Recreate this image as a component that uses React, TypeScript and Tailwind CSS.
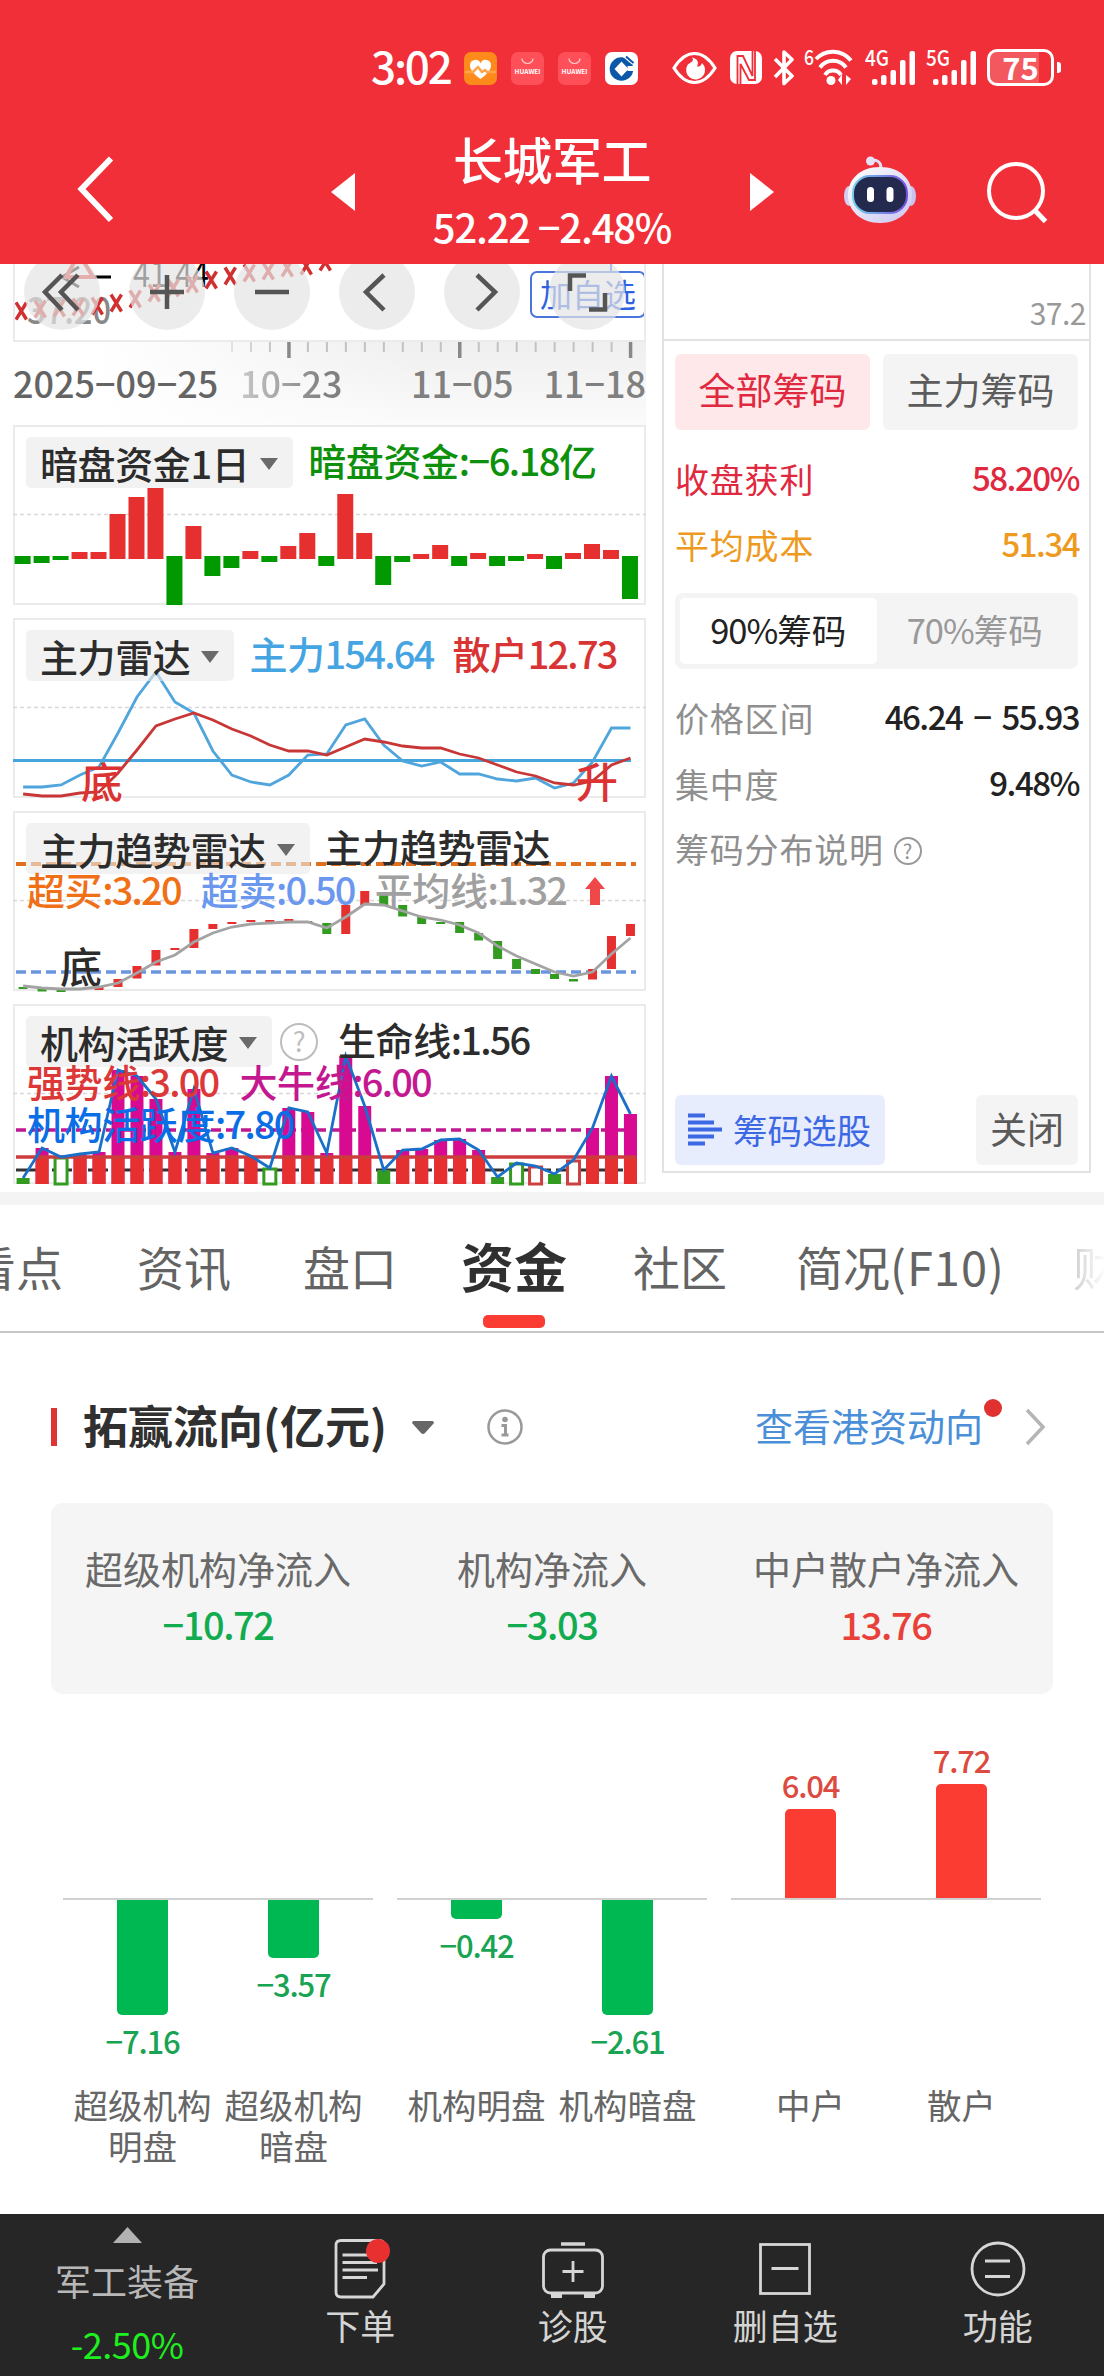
import type { ReactNode } from "react";

const STEP = 18.98;
const cx = (i: number) => 10.1 + STEP * i;
const toPoints = (ys: number[]) => ys.map((y, i) => `${cx(i)},${y}`).join(" ");

// positive = inflow, negative = outflow, in pixels of bar height
const DARK_FUNDS = [
  -8, -7, -4, 7, 7, 45, 62, 71, -49, 33, -20, -12, 8, -6, 13, 26, -10, 65, 26, -29, -6, 5, 14, -10,
  6, -10, -5, 5, -13, 6, 15, 9, -43,
];

const MAIN_FORCE = [
  169, 169, 167, 157, 149, 115, 79, 54, 84, 95, 133, 157, 164, 167, 157, 137, 136, 107, 101, 127,
  143, 148, 144, 156, 156, 161, 163, 160, 170, 165, 144, 110, 110,
];
const RETAIL = [
  176, 178, 178, 175, 174, 155, 132, 108, 101, 95, 102, 111, 118, 127, 133, 133, 137, 129, 121, 124,
  128, 130, 130, 136, 140, 147, 154, 158, 165, 167, 163, 147, 140,
];

const TREND = [
  175, 177, 178, 178, 176, 172, 162, 151, 144, 131, 122, 116, 113, 112, 111, 111, 117, 106, 93, 94,
  100, 106, 109, 114, 122, 135, 145, 153, 161, 165, 161, 143, 127,
];
// [up, top, height]
const CANDLES: [number, number, number][] = [
  [0, 176, 2], [0, 178, 2.5], [0, 178, 3], [1, 177, 2], [1, 176, 3], [1, 168, 8], [1, 155, 12.5],
  [1, 139, 15.5], [1, 137, 2], [1, 118, 19], [1, 113, 5], [1, 111, 2], [1, 109, 2], [1, 109, 2],
  [1, 108, 3], [0, 110, 2], [0, 112, 11], [1, 94, 29], [1, 80, 14], [0, 84, 10], [0, 94, 11.5],
  [0, 106, 7], [0, 111, 2], [0, 111, 11], [0, 122, 7.5], [0, 130, 18], [0, 148, 10], [0, 158, 5],
  [0, 163, 5], [0, 168, 2.5], [1, 158, 10.5], [1, 125, 33], [1, 113, 12],
];

const ACTIVITY = [
  174, 144, 153, 150, 148, 66, 72, 95, 148, 85, 149, 144, 152, 164, 104, 108, 149, 52, 102, 166,
  146, 145, 136, 135, 146, 173, 159, 162, 170, 156, 124, 72, 110,
];
const HOLLOW_GREEN = [2, 13, 26];
const HOLLOW_RED = [27, 29];
const SOLID_GREEN = [0, 19, 25, 28];

const CROSSES = [
  47, 45, 44, 43, 42, 39, 35, 29, 24, 20, 16, 12, 9, 7, 4, 2, -2,
];

const FLOW_GROUPS = [
  [
    { name: "超级机构明盘", value: "−7.16", height: 115, up: false },
    { name: "超级机构暗盘", value: "−3.57", height: 58, up: false },
  ],
  [
    { name: "机构明盘", value: "−0.42", height: 19, up: false },
    { name: "机构暗盘", value: "−2.61", height: 115, up: false },
  ],
  [
    { name: "中户", value: "6.04", height: 89, up: true },
    { name: "散户", value: "7.72", height: 114, up: true },
  ],
];

function Signal({ label }: { label: string }) {
  return (
    <svg className="overflow-visible" width="52" height="38" viewBox="0 0 52 38" fill="#fff">
      <text x="0" y="17" fontSize="22" fontWeight="500" textLength="24" lengthAdjust="spacingAndGlyphs">
        {label}
      </text>
      <rect x="7" y="30" width="5.5" height="6" rx="2" />
      <rect x="16" y="26" width="5.5" height="10" rx="2" />
      <rect x="25.5" y="21" width="5.5" height="15" rx="2" />
      <rect x="35" y="11" width="5.5" height="25" rx="2" />
      <rect x="44.500" y="2" width="5.5" height="34" rx="2" />
    </svg>
  );
}

function HuaweiIcon() {
  return (
    <svg width="33" height="33" viewBox="0 0 33 33">
      <rect width="33" height="33" rx="7" fill="#ff4f58" />
      <path d="M11 6.500a5.500 5 0 0 0 11 0" fill="none" stroke="#ffd0d0" strokeWidth="1.200" />
      <text x="3.500" y="21.500" fontSize="6.500" fontWeight="700" fill="#fff" textLength="26" lengthAdjust="spacingAndGlyphs">
        HUAWEI
      </text>
    </svg>
  );
}

function StatusBar() {
  return (
    <div className="flex h-[137px] pl-[371px] pt-[49px]">
      <span className="-mt-[2px] w-[93px] text-[44px] font-medium leading-[36px] tracking-[-2.2px]">3:02</span>
      <div className="mt-[3px] flex h-[33px] w-[208px] gap-[14px]">
        <svg width="33" height="33" viewBox="0 0 33 33">
          <rect width="33" height="33" rx="7" fill="#ff8a1c" />
          <path d="M16.500 27C9 21.500 6 17.500 6 13.500a5.400 5.400 0 0 1 10.500-2 5.400 5.400 0 0 1 10.500 2c0 4-3 8-10.500 13.500z" fill="#fff" />
          <path d="M1 20h8l5-5 4 5 3-2 2 2h9" fill="none" stroke="#ffa54a" strokeWidth="2.500" />
        </svg>
        <HuaweiIcon />
        <HuaweiIcon />
        <svg width="33" height="33" viewBox="0 0 33 33">
          <rect width="33" height="33" rx="7" fill="#fff" />
          <circle cx="16.500" cy="17" r="11.800" fill="#0b57a8" />
          <path d="M16.500 9.500l7 7.500-7 7.500-7-7.500z" fill="#fff" />
          <path d="M22.500 14h8v5h-8z" fill="#fff" />
          <path d="M18.500 4.500l9 7.500" stroke="#fff" strokeWidth="1.500" />
          <path d="M21 4.500l7.500 6.500" stroke="#0b57a8" strokeWidth="2" />
        </svg>
      </div>
      <svg className="mr-[13px] mt-px" width="45" height="36" viewBox="0 0 45 36">
        <path d="M2 18Q11 3.500 22.500 3.500T43 18Q34 32.500 22.500 32.500T2 18z" fill="none" stroke="#fff" strokeWidth="3.200" />
        <path d="M20 7.500c3 4-2 5-4.500 7.500A9.500 9.500 0 1 0 30 13c-1 3-3 4-5 3.500C27.500 12 25 8.500 20 7.500z" fill="#fff" />
      </svg>
      <svg className="mr-[11px] mt-px" width="32" height="36" viewBox="0 0 32 36">
        <rect x="0" y="1" width="32" height="33" rx="7" fill="#fff" />
        <path d="M7.500 35V6l5.500 0 9.500 20V1M10.500 35V14l8.500 16h6V1" fill="none" stroke="#f12f38" strokeWidth="1.800" />
      </svg>
      <svg className="mr-[9px] mt-px" width="22" height="36" viewBox="0 0 22 36">
        <path d="M2 9l17 17-8 7.500V2l8 7.500L2 27" fill="none" stroke="#fff" strokeWidth="3.600" strokeLinejoin="round" />
      </svg>
      <svg className="mr-[11px] overflow-visible" width="50" height="38" viewBox="0 0 50 38">
        <text x="0" y="16" fontSize="21" fontWeight="500" fill="#fff" textLength="10" lengthAdjust="spacingAndGlyphs">
          6
        </text>
        <g fill="none" stroke="#fff" strokeWidth="4">
          <path d="M12 10a23 23 0 0 1 35 1.500" />
          <path d="M16 18.500a16 16 0 0 1 26 0" />
          <path d="M21 26a9.500 9.500 0 0 1 16 0" />
        </g>
        <circle cx="27" cy="31.500" r="4.500" fill="#fff" />
        <path d="M34 31l4-6v11zM42 26v10l5-6z" fill="#fff" />
      </svg>
      <span className="mr-[9px]">
        <Signal label="4G" />
      </span>
      <span className="mr-[9px]">
        <Signal label="5G" />
      </span>
      <div className="relative flex h-[37px] w-[67px] items-center justify-center rounded-[10px] border-3 border-white">
        <div className="absolute inset-y-0 left-0 w-[49px] rounded-l-[7px] bg-white/20" />
        <span className="relative pb-0.5 text-[31px] font-bold leading-[31px]">75</span>
      </div>
      <div className="ml-[3px] mt-[13px] h-[11px] w-[4px] rounded-r-[3px] bg-white" />
    </div>
  );
}

function Robot() {
  return (
    <svg width="74" height="70" viewBox="0 0 74 70">
      <defs>
        <linearGradient id="shell" x1="0" y1="0" x2="1" y2="1">
          <stop offset="0" stopColor="#fff" />
          <stop offset="1" stopColor="#c9c6f0" />
        </linearGradient>
        <linearGradient id="rim" x1="0" y1="0" x2="1" y2="0">
          <stop offset="0" stopColor="#6fd0ea" />
          <stop offset="1" stopColor="#7a4fe0" />
        </linearGradient>
      </defs>
      <path d="M38 13c0-6-3-8-9-8" fill="none" stroke="#e2def6" strokeWidth="3" />
      <circle cx="27.500" cy="6" r="4.500" fill="#e6e2f8" />
      <ellipse cx="6" cy="41" rx="5" ry="10" fill="#d3cff2" />
      <ellipse cx="68" cy="41" rx="5" ry="10" fill="#c8c4ee" />
      <path d="M37 12c21 0 32 13 32 28S57 68 37 68 5 55 5 40 16 12 37 12z" fill="url(#shell)" />
      <rect x="10" y="21" width="54" height="37" rx="17" fill="#232a4d" stroke="url(#rim)" strokeWidth="2" />
      <rect x="24" y="32" width="7" height="15" rx="3.500" fill="#fff" />
      <rect x="43.500" y="32" width="7" height="15" rx="3.500" fill="#fff" />
    </svg>
  );
}

function TitleBar() {
  return (
    <div className="flex h-[127px] items-start">
      <svg className="ml-[76px] mt-[18px]" width="40" height="70" viewBox="0 0 40 70">
        <path d="M35 3.500L5.500 34 35 65" fill="none" stroke="#fff" strokeWidth="6" />
      </svg>
      <svg className="ml-[215px] mt-[36px]" width="24" height="38" viewBox="0 0 24 38">
        <path d="M24 0v38L0 19z" fill="#fff" />
      </svg>
      <div className="ml-[45px] flex w-[304px] flex-col items-center">
        <span className="-mt-[3px] text-[50px] font-medium leading-[48px] tracking-[-0.5px]">长城军工</span>
        <span className="mt-[20px] whitespace-nowrap text-[40px] font-medium leading-[48px] tracking-[-1.2px]">
          52.22 −2.48%
        </span>
      </div>
      <svg className="ml-[46px] mt-[36px]" width="24" height="38" viewBox="0 0 24 38">
        <path d="M0 0v38L24 19z" fill="#fff" />
      </svg>
      <span className="ml-[69px] mt-[18px]">
        <Robot />
      </span>
      <svg className="ml-[69px] mt-[23px]" width="64" height="64" viewBox="0 0 64 64">
        <circle cx="30" cy="31" r="27" fill="none" stroke="#fff" strokeWidth="4" />
        <path d="M48 49.500l11.500 12" stroke="#fff" strokeWidth="5" />
      </svg>
    </div>
  );
}

function ToolButton({ path }: { path: string }) {
  return (
    <span className="size-[76px] rounded-full bg-[#e4e4e4]/70">
      <svg width="76" height="76" viewBox="0 0 76 76">
        <path d={path} fill="none" stroke="#555" strokeWidth="4.500" />
      </svg>
    </span>
  );
}

function PriceStrip() {
  return (
    <div className="relative h-[78px] overflow-hidden border-x-2 border-b-2 border-[#ebebeb]">
      <svg className="absolute -left-0.5 top-0" width="633" height="78" viewBox="0 0 633 78">
        <text x="14" y="60" fontSize="37" fontWeight="500" fill="#888" textLength="84" lengthAdjust="spacingAndGlyphs">
          37.20
        </text>
        <text x="120" y="23" fontSize="36" fill="#000" textLength="76" lengthAdjust="spacingAndGlyphs">
          41.44
        </text>
        <path d="M49 13h49M66 3L49 13l17 10" fill="none" stroke="#000" strokeWidth="3" />
        <path d="M53 13h27L66-10z" fill="none" stroke="#e03838" strokeWidth="4" />
        {CROSSES.map((y, i) => (
          <path
            key={i}
            d={`M${3 + i * 19} ${y - 8.5}l10.500 17m0-17l-10.500 17`}
            stroke="#d03030"
            strokeWidth="3.400"
          />
        ))}
        <path d="M598 0v8" stroke="#3a5ee0" strokeWidth="2" />
      </svg>
      <span className="absolute -right-0.5 top-[7px] h-[47px] w-[116px] rounded-[7px] border-2 border-[#4a76dc] text-center text-[32px] leading-[40px] text-[#2f62e0]">
        加自选
      </span>
      <div className="absolute -top-[10px] left-[9px] flex gap-[29px]">
        <ToolButton path="M38 21L21 38l17 18M54 21L37 38l17 18" />
        <ToolButton path="M38 21v34M21 38h34" />
        <ToolButton path="M21 38h34" />
        <ToolButton path="M45 21L27 38l18 18" />
        <ToolButton path="M33 21l18 17-18 18" />
        <ToolButton path="M37 21.500H21V37M40 55.500h16V39" />
      </div>
    </div>
  );
}

function DateRuler() {
  return (
    <div className="relative h-[83px] bg-linear-to-b from-[#efefef] to-[#fbfbfb] text-[#808080]">
      <div className="absolute inset-y-0 left-0 w-[400px] bg-linear-to-r from-white from-20% to-white/0" />
      <svg className="relative block" width="633" height="18" viewBox="0 0 633 18">
        {Array.from({ length: 22 }, (_, k) => {
          const major = k % 9 === 3;
          return (
            <path
              key={k}
              d={`M${219 + k * STEP} 0v${major ? 16 : 10}`}
              stroke={major ? "#888" : "#c2c2c2"}
              strokeWidth={major ? 3.5 : 2}
              opacity={k < 3 ? 0.4 + k * 0.25 : 1}
            />
          );
        })}
      </svg>
      <div className="relative mt-[2px] flex text-[36px] font-medium leading-[40px]">
        <span className="w-[227px] text-[#646464]">2025−09−25</span>
        <span className="w-[171px] bg-linear-to-r from-[#c8c8c8] to-[#808080] to-50% bg-clip-text text-transparent">
          10−23
        </span>
        <span>11−05</span>
        <span className="ml-auto">11−18</span>
      </div>
    </div>
  );
}

function Legend({ name, value, className }: { name: string; value: string; className: string }) {
  return (
    <span className={className}>
      {name}
      <span className="tracking-[-1.8px]">{value}</span>
    </span>
  );
}

function Panel({ title, chart, legend, children }: {
  title: string;
  chart: ReactNode;
  legend: ReactNode;
  children?: ReactNode;
}) {
  return (
    <section className="relative h-[180px] border-2 border-[#ebebeb] font-medium">
      <svg className="absolute -left-0.5 -top-0.5 overflow-visible" width="633" height="180" viewBox="0 0 633 180">
        <path d="M0 89.500h633" stroke="#d8d8d8" strokeWidth="1.500" strokeDasharray="4 3" />
        {chart}
      </svg>
      <div className="relative ml-[11px] mt-[10px] flex whitespace-nowrap text-[38px] leading-[46px] tracking-[-0.4px]">
        <span className="mr-[15px] flex h-[51px] items-center rounded-[5px] bg-[#e9e9e9]/60 pl-[14px] pr-[15px] text-[#2c2c2c]">
          {title}
          <svg className="ml-[11px] mt-[2px]" width="18" height="12" viewBox="0 0 18 12">
            <path d="M0 0h18L9 12z" fill="#6a6a6a" />
          </svg>
        </span>
        {legend}
      </div>
      {children}
    </section>
  );
}

function DarkFundsPanel() {
  return (
    <Panel
      title="暗盘资金1日"
      legend={
        <span className="text-[#0d910d]">
          暗盘资金<span className="tracking-[-1.5px]">:−6.18</span>亿
        </span>
      }
      chart={DARK_FUNDS.map((v, i) => (
        <rect
          key={i}
          x={cx(i) - 8.5}
          y={v > 0 ? 134 - v : 131}
          width="16"
          height={Math.abs(v)}
          fill={v > 0 ? "#e63030" : "#009a00"}
        />
      ))}
    />
  );
}

function RadarPanel() {
  return (
    <Panel
      title="主力雷达"
      legend={
        <>
          <Legend name="主力" value="154.64" className="text-[#45a5e2]" />
          <Legend name="散户" value="12.73" className="ml-[19px] text-[#d83434]" />
        </>
      }
      chart={
        <>
          <path d="M0 142.500h618" stroke="#45a5dc" strokeWidth="3" />
          <polyline points={toPoints(MAIN_FORCE)} fill="none" stroke="#4fa5dc" strokeWidth="2.800" />
          <polyline points={toPoints(RETAIL)} fill="none" stroke="#c93636" strokeWidth="2.800" />
          <g fill="#dc3232" fontSize="42">
            <text x="68" y="180">底</text>
            <text x="563" y="180">升</text>
          </g>
        </>
      }
    />
  );
}

function TrendPanel() {
  return (
    <Panel
      title="主力趋势雷达"
      legend={<span className="text-[#2c2c2c]">主力趋势雷达</span>}
      chart={
        <>
          <path d="M3 53h620" stroke="#e07020" strokeWidth="4" strokeDasharray="10 5" />
          <path d="M3 161h620" stroke="#6a96e0" strokeWidth="3.500" strokeDasharray="10 5" />
          <text x="47" y="172" fontSize="42" fill="#2c2c2c">底</text>
          {CANDLES.map(([up, top, height], i) => (
            <rect key={i} x={cx(i) - 4.5} y={top} width="9" height={height} fill={up ? "#e63030" : "#339c20"} />
          ))}
          <polyline points={toPoints(TREND)} fill="none" stroke="#a3a3a3" strokeWidth="2.800" />
        </>
      }
    >
      <div className="relative -mt-[8px] ml-[12px] flex whitespace-nowrap text-[38px] leading-[46px] tracking-[-0.4px]">
        <Legend name="超买" value=":3.20" className="text-[#f07018]" />
        <Legend name="超卖" value=":0.50" className="ml-[20px] text-[#6b98ee]" />
        <Legend name="平均线" value=":1.32" className="ml-[20px] text-[#a0a0a0]" />
        <svg className="ml-[19px] mt-[11px]" width="20" height="28" viewBox="0 0 20 28">
          <path d="M10 0l10 12h-5v16H5V12H0z" fill="#f04848" />
        </svg>
      </div>
    </Panel>
  );
}

function ActivityBar({ index, top }: { index: number; top: number }) {
  const x = cx(index) - 6.5;
  if (SOLID_GREEN.includes(index)) {
    return <rect x={x} y={top} width="13" height={180 - top} fill="#339c20" />;
  }
  if (HOLLOW_GREEN.includes(index) || HOLLOW_RED.includes(index)) {
    return (
      <rect
        x={x + 0.5}
        y={top + 1}
        width="12"
        height={179 - top}
        fill="#fff"
        stroke={HOLLOW_RED.includes(index) ? "#cc4040" : "#339c20"}
        strokeWidth="3"
      />
    );
  }
  return (
    <>
      <rect x={x} y={top} width="13" height={180 - top} fill="#d80a92" />
      <rect x={x} y="154" width="13" height="26" fill="#e63030" />
    </>
  );
}

function ActivityPanel() {
  return (
    <Panel
      title="机构活跃度"
      legend={
        <>
          <span className="-ml-[7px] mt-[7px] size-[38px] rounded-full border-2 border-[#bdbdbd] text-center text-[27px] font-normal leading-[32px] text-[#bdbdbd]">
            ?
          </span>
          <Legend name="生命线" value=":1.56" className="ml-[20px] text-[#2c2c2c]" />
        </>
      }
      chart={
        <>
          <path d="M3 126h620" stroke="#c01890" strokeWidth="3.500" strokeDasharray="10 5" />
          <path d="M3 166h620" stroke="#333" strokeWidth="3" strokeDasharray="20 5 6 5" />
          {ACTIVITY.map((top, i) => (
            <ActivityBar key={i} index={i} top={top} />
          ))}
          <path d="M3 153h620" stroke="#cc3c3c" strokeWidth="3.500" />
          <polyline points={toPoints(ACTIVITY)} fill="none" stroke="#1a70c8" strokeWidth="2.800" />
        </>
      }
    >
      <div className="relative -mt-[7px] ml-[12px] whitespace-nowrap text-[38px] leading-[42px] tracking-[-0.4px]">
        <div className="flex">
          <Legend name="强势线" value=":3.00" className="text-[#dc3838]" />
          <Legend name="大牛线" value=":6.00" className="ml-[21px] text-[#c41890]" />
        </div>
        <Legend name="机构活跃度" value=":7.80" className="text-[#0a6ee6]" />
      </div>
    </Panel>
  );
}

function ChipRow({ label, value, color, valueColor }: {
  label: string;
  value: string;
  color: string;
  valueColor: string;
}) {
  return (
    <div className="flex h-[66px] items-center justify-between pb-1 text-[34px]">
      <span className={`tracking-[0.8px] ${color}`}>{label}</span>
      <span className={`-mr-[1px] text-[33px] font-medium tracking-[-1.5px] [word-spacing:5px] ${valueColor}`}>
        {value}
      </span>
    </div>
  );
}

function ChipPanel() {
  return (
    <aside className="ml-[16px] flex h-[909px] w-[429px] flex-col border-x-2 border-b-2 border-[#e2e2e2]">
      <div className="h-[77px] border-b-2 border-[#e2e2e2] pr-[3px] pt-[28px] text-right text-[30px] leading-[40px] tracking-[-0.5px] text-[#999]">
        37.2
      </div>
      <div className="flex flex-1 flex-col px-[11px] pt-[13px]">
        <div className="flex gap-[13px] text-center text-[37px] leading-[70px]">
          <span className="h-[76px] flex-1 rounded-[6px] bg-[#fee8ea] text-[#e0283e]">全部筹码</span>
          <span className="h-[76px] flex-1 rounded-[6px] bg-[#f4f4f4] text-[#5c5c5c]">主力筹码</span>
        </div>
        <div className="mt-[17px]">
          <ChipRow label="收盘获利" value="58.20%" color="text-[#e0283e]" valueColor="text-[#e0283e]" />
          <ChipRow label="平均成本" value="51.34" color="text-[#ee9a20]" valueColor="text-[#ee9a20]" />
        </div>
        <div className="mt-[14px] flex h-[76px] rounded-[8px] bg-[#f4f4f4] p-[5px] text-center text-[34.500px] leading-[62px]">
          <span className="flex-1 rounded-[5px] bg-white text-[#222]">
            <span className="tracking-[-1px]">90%</span>筹码
          </span>
          <span className="flex-1 text-[#999]">
            <span className="tracking-[-1px]">70%</span>筹码
          </span>
        </div>
        <div className="mt-[17px]">
          <ChipRow label="价格区间" value="46.24 − 55.93" color="text-[#8f8f8f]" valueColor="text-[#222]" />
          <ChipRow label="集中度" value="9.48%" color="text-[#8f8f8f]" valueColor="text-[#222]" />
        </div>
        <div className="flex h-[66px] items-center pb-[5px] text-[34px] tracking-[0.8px] text-[#8f8f8f]">
          筹码分布说明
          <span className="ml-[10px] mt-1 size-[28px] rounded-full border-2 border-[#999] text-center text-[20px] leading-[23px]">
            ?
          </span>
        </div>
        <div className="mb-[6px] mt-auto flex justify-between">
          <span className="flex h-[70px] w-[210px] items-center rounded-[6px] bg-[#e8edfd] pb-[2px] pl-[13px] text-[34.500px] leading-[60px] text-[#3d68e4]">
            <svg className="mr-[11px] mt-[2px]" width="34" height="34" viewBox="0 0 34 34">
              <path d="M0 2.500h17M0 9.500h26M0 16.500h34M0 23.500h26M0 30.500h17" stroke="#3d68e4" strokeWidth="4" />
            </svg>
            筹码选股
          </span>
          <span className="h-[70px] w-[102px] rounded-[6px] bg-[#f4f4f4] text-center text-[37px] leading-[66px] text-[#5a5a5a]">
            关闭
          </span>
        </div>
      </div>
    </aside>
  );
}

function Tabs() {
  return (
    <nav className="flex h-[128px] items-center overflow-hidden whitespace-nowrap border-b-2 border-[#c6c6c6] pb-[4px] text-[47px] text-[#646464]">
      <span className="-ml-[31px]">看点</span>
      <span className="ml-[74px]">资讯</span>
      <span className="ml-[72px]">盘口</span>
      <span className="relative ml-[64px] text-[53px] font-bold text-[#303030]">
        资金
        <span className="absolute left-[22px] top-[89px] h-[13px] w-[62px] rounded-[5px] bg-[#fb3c32]" />
      </span>
      <span className="ml-[66px]">社区</span>
      <span className="ml-[69px]">
        简况<span className="tracking-[1px]">(F10)</span>
      </span>
      <span className="ml-[68px] bg-linear-to-r from-[#cfcfcf] to-white to-70% bg-clip-text text-transparent">财</span>
    </nav>
  );
}

function Summary({ label, value, color }: { label: string; value: string; color: string }) {
  return (
    <div className="flex w-[334px] flex-col items-center">
      <span className="text-[38px] leading-[56px] text-[#6a6a6a]">{label}</span>
      <span className={`text-[38px] font-medium leading-[56px] tracking-[-1.4px] ${color}`}>{value}</span>
    </div>
  );
}

function FundFlow() {
  return (
    <section className="h-[881px]">
      <div className="flex h-[170px] items-center px-[51px] pt-[18px]">
        <span className="h-[38px] w-[6px] bg-[#e03434]" />
        <h2 className="ml-[26px] pb-1 text-[45px] font-bold leading-[60px] text-[#303030]">拓赢流向(亿元)</h2>
        <svg className="ml-[25px]" width="22" height="13" viewBox="0 0 22 13">
          <path d="M1 0h20l1 2-9 10q-2 2-4 0L0 2z" fill="#666" />
        </svg>
        <svg className="ml-[53px]" width="36" height="36" viewBox="0 0 36 36" fill="none" stroke="#999" strokeWidth="2.500">
          <circle cx="18" cy="18" r="16.500" />
          <circle cx="18" cy="10.500" r="2.800" fill="#999" stroke="none" />
          <path d="M14.500 16.500h4V26M14.500 26h7" strokeWidth="3" />
        </svg>
        <span className="relative ml-auto mr-[42px] pb-1 text-[38px] leading-[50px] text-[#4a8fd8]">
          查看港资动向
          <span className="absolute -right-[19px] -top-px size-[18px] rounded-full bg-[#e03030]" />
        </span>
        <svg className="mr-[8px]" width="20" height="38" viewBox="0 0 20 38">
          <path d="M2 2l16 17L2 36" fill="none" stroke="#b5b5b5" strokeWidth="3.500" />
        </svg>
      </div>

      <div className="mx-[51px] flex h-[191px] rounded-[12px] bg-[#f5f5f5] pt-[37px]">
        <Summary label="超级机构净流入" value="−10.72" color="text-[#12ac50]" />
        <Summary label="机构净流入" value="−3.03" color="text-[#12ac50]" />
        <Summary label="中户散户净流入" value="13.76" color="text-[#e8413a]" />
      </div>

      <div className="flex gap-[24px] px-[63px]">
        {FLOW_GROUPS.map((group) => (
          <div key={group[0].name} className="w-[310px] text-center text-[31px] font-medium">
            <div className="flex h-[204px] items-end justify-center text-[#dc4a40]">
              {group.map((bar) => (
                <div key={bar.name} className="flex w-[151px] flex-col items-center">
                  {bar.up && (
                    <>
                      <span className="leading-[48px] tracking-[-1.2px]">{bar.value}</span>
                      <span className="w-[51px] rounded-t-[5px] bg-[#fb3c32]" style={{ height: bar.height }} />
                    </>
                  )}
                </div>
              ))}
            </div>
            <div className="h-0.5 bg-[#d0d0d0]" />
            <div className="flex h-[184px] justify-center text-[#18a452]">
              {group.map((bar) => (
                <div key={bar.name} className="flex w-[151px] flex-col items-center">
                  {!bar.up && (
                    <>
                      <span className="w-[51px] rounded-b-[5px] bg-[#00b852]" style={{ height: bar.height }} />
                      <span className="leading-[51px] tracking-[-1.2px]">{bar.value}</span>
                    </>
                  )}
                </div>
              ))}
            </div>
            <div className="flex justify-center text-[34.500px] font-normal leading-[41px] text-[#666]">
              {group.map((bar) => (
                <div key={bar.name} className="w-[151px] px-[4px]">
                  {bar.name}
                </div>
              ))}
            </div>
          </div>
        ))}
      </div>
    </section>
  );
}

function NavItem({ label, children }: { label: string; children: ReactNode }) {
  return (
    <div className="flex w-[212.500px] flex-col items-center pt-[22px]">
      <svg width="70" height="66" viewBox="0 0 70 66" fill="none" stroke="#d6d6d6" strokeWidth="2.800">
        {children}
      </svg>
      <span className="text-[35px] leading-[46px]">{label}</span>
    </div>
  );
}

function BottomBar() {
  return (
    <footer className="flex h-[162px] bg-[#262626] text-[#d4d4d4]">
      <div className="flex w-[254px] flex-col items-center pt-[13px] text-[36px]">
        <svg width="29" height="16" viewBox="0 0 29 16">
          <path d="M14.500 0L29 16H0z" fill="#b2b2b2" />
        </svg>
        <span className="mt-[12px] leading-[50px] text-[#b8b8b8]">军工装备</span>
        <span className="mt-[13px] leading-[50px] tracking-[-0.5px] text-[#1fee1f]">-2.50%</span>
      </div>
      <NavItem label="下单">
        <path d="M16 4.500h38q5 0 5 5V48L48 61H16q-5 0-5-5V9.500q0-5 5-5z" />
        <path d="M17.500 19H43M17.500 26.500H52M17.500 34H53M17.500 41.500H42" strokeWidth="3.200" />
        <circle cx="53" cy="15" r="12" fill="#e83030" stroke="none" />
      </NavItem>
      <NavItem label="诊股">
        <rect x="5.500" y="14" width="59" height="43" rx="7" />
        <path d="M23 8h24" strokeWidth="3.500" />
        <path d="M13 60h11M46 60h11" strokeWidth="4" />
        <path d="M35 25v21M24.500 35.500h21" />
      </NavItem>
      <NavItem label="删自选">
        <rect x="10.500" y="8.500" width="49" height="49" />
        <path d="M21.500 32.500h27" strokeWidth="3" />
      </NavItem>
      <NavItem label="功能">
        <circle cx="35" cy="33" r="26" />
        <path d="M22 25h25M22 40.500h25" strokeWidth="3.200" />
      </NavItem>
    </footer>
  );
}

export default function App() {
  return (
    <div className="w-[1104px] overflow-hidden bg-white font-['Noto_Sans_CJK_SC',sans-serif]">
      <header className="h-[264px] bg-[#f12f38] text-white">
        <StatusBar />
        <TitleBar />
      </header>
      <main className="flex h-[928px]">
        <div className="ml-[13px] w-[633px]">
          <PriceStrip />
          <DateRuler />
          <div className="flex flex-col gap-[13px]">
            <DarkFundsPanel />
            <RadarPanel />
            <TrendPanel />
            <ActivityPanel />
          </div>
        </div>
        <ChipPanel />
      </main>
      <div className="h-[13px] bg-[#f4f4f4]" />
      <Tabs />
      <FundFlow />
      <BottomBar />
    </div>
  );
}
